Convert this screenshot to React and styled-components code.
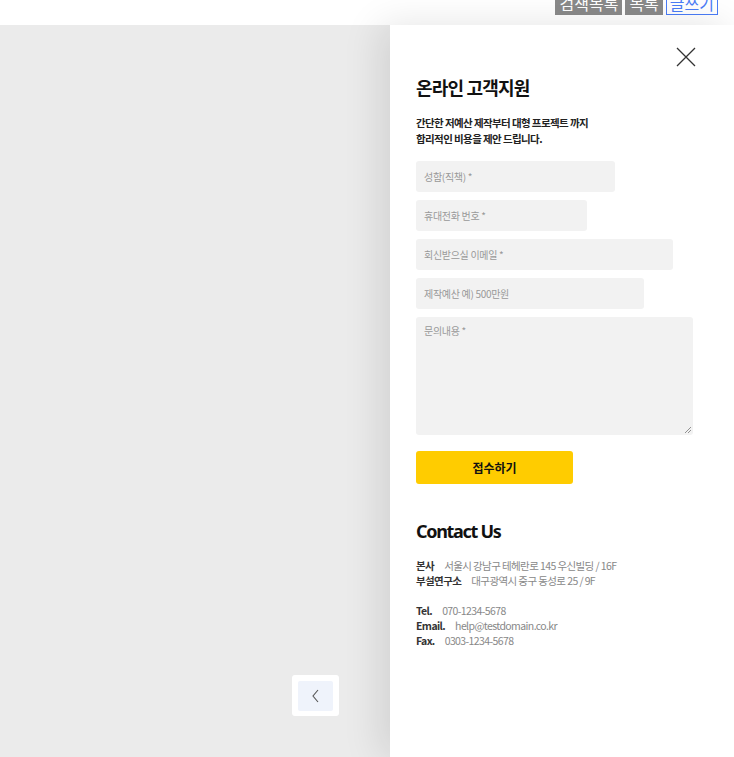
import React from "react";
import styled, { createGlobalStyle } from "styled-components";

const GlobalStyle = createGlobalStyle`
  html, body {
    margin: 0;
    padding: 0;
    height: 100%;
    overflow: hidden;
    background: #fff;
    font-family: "Noto Sans CJK KR", "Noto Sans", sans-serif;
  }
  #root {
    height: 100%;
  }
`;

const Page = styled.div`
  height: 100vh;
  display: flex;
  flex-direction: column;
`;

const Toolbar = styled.div`
  display: flex;
  justify-content: flex-end;
  gap: 3px;
  padding-right: 16px;
  margin-top: -9px;
  height: 34px;
  flex-shrink: 0;
`;

const ToolButton = styled.button`
  height: 24px;
  padding: 0 3px;
  border: ${(p) => (p.$primary ? "1px solid #4a7cf7" : "1px solid #8a8a8a")};
  background: ${(p) => (p.$primary ? "#fff" : "#8a8a8a")};
  color: ${(p) => (p.$primary ? "#4a7cf7" : "#fff")};
  font-family: "Noto Sans CJK KR", sans-serif;
  font-size: 16px;
  line-height: 20px;
  cursor: pointer;
`;

const Main = styled.div`
  flex: 1;
  display: flex;
  min-height: 0;
`;

const Overlay = styled.div`
  flex: 0 0 390px;
  background: #ebebeb;
  position: relative;
`;

const PrevButton = styled.div`
  position: absolute;
  left: 292px;
  top: 650px;
  width: 47px;
  height: 41px;
  background: #fff;
  border-radius: 3px;
  display: flex;
  align-items: center;
  justify-content: center;
`;

const PrevInner = styled.div`
  width: 35px;
  height: 30px;
  border-radius: 2px;
  background: #eff3fb;
  display: flex;
  align-items: center;
  justify-content: center;
`;

const Panel = styled.div`
  flex: 1;
  background: #fff;
  position: relative;
  box-shadow: -10px 0 36px rgba(0, 0, 0, 0.11);
  padding: 49px 26px 0 26px;
  box-sizing: border-box;
`;

const CloseButton = styled.div`
  position: absolute;
  right: 38px;
  top: 22px;
  width: 20px;
  height: 20px;
`;

const Title = styled.h2`
  margin: 0;
  font-size: 18px;
  font-weight: 700;
  letter-spacing: -0.8px;
  color: #111;
  line-height: 26px;
`;

const Desc = styled.p`
  margin: 15px 0 14px;
  font-size: 10.5px;
  font-weight: 700;
  line-height: 16px;
  letter-spacing: -0.6px;
  color: #222;
`;

const Form = styled.div`
  display: flex;
  flex-direction: column;
  gap: 8px;
`;

const Field = styled.div`
  width: ${(p) => p.$w}px;
  height: ${(p) => p.$h || 31}px;
  background: #f2f2f2;
  border-radius: 3px;
  box-sizing: border-box;
  padding: ${(p) => (p.$area ? "6px 8px" : "0 8px")};
  display: flex;
  align-items: ${(p) => (p.$area ? "flex-start" : "center")};
  font-size: 10px;
  color: #999;
  letter-spacing: -0.3px;
  position: relative;
`;

const Grip = styled.svg`
  position: absolute;
  right: 1px;
  bottom: 1px;
`;

const Submit = styled.button`
  margin-top: 16px;
  width: 157px;
  height: 33px;
  border: none;
  border-radius: 3px;
  background: #ffcc00;
  font-family: "Noto Sans CJK KR", sans-serif;
  font-size: 12px;
  font-weight: 700;
  color: #111;
  cursor: pointer;
`;

const ContactTitle = styled.h3`
  margin: 35px 0 15px;
  font-family: "Noto Sans", "Noto Sans CJK KR", sans-serif;
  font-size: 18px;
  font-weight: 700;
  letter-spacing: -1.3px;
  line-height: 24px;
  color: #111;
`;

const InfoBlock = styled.div`
  margin-bottom: 15px;
`;

const InfoLine = styled.div`
  font-size: 10.5px;
  line-height: 15px;
  letter-spacing: -0.6px;
  color: #888;
  white-space: nowrap;
`;

const Label = styled.span`
  font-weight: 700;
  color: #333;
  margin-right: ${(p) => p.$gap || 10}px;
`;

export default function App() {
  return (
    <Page>
      <GlobalStyle />
      <Toolbar>
        <ToolButton>검색목록</ToolButton>
        <ToolButton>목록</ToolButton>
        <ToolButton $primary>글쓰기</ToolButton>
      </Toolbar>
      <Main>
        <Overlay>
          <PrevButton>
            <PrevInner>
              <svg width="10" height="14" viewBox="0 0 10 14">
                <path d="M7 1 L2 7 L7 13" fill="none" stroke="#555" strokeWidth="1.1" />
              </svg>
            </PrevInner>
          </PrevButton>
        </Overlay>
        <Panel>
          <CloseButton>
            <svg width="20" height="20" viewBox="0 0 20 20">
              <path d="M1 1 L19 19 M19 1 L1 19" stroke="#333" strokeWidth="1.3" />
            </svg>
          </CloseButton>
          <Title>온라인 고객지원</Title>
          <Desc>
            간단한 저예산 제작부터 대형 프로젝트 까지
            <br />
            합리적인 비용을 제안 드립니다.
          </Desc>
          <Form>
            <Field $w={199}>성함(직책) *</Field>
            <Field $w={171}>휴대전화 번호 *</Field>
            <Field $w={257}>회신받으실 이메일 *</Field>
            <Field $w={228}>제작예산 예) 500만원</Field>
            <Field $w={277} $h={118} $area>
              문의내용 *
              <Grip width="8" height="8" viewBox="0 0 8 8">
                <path d="M7 1 L1 7 M7 4 L4 7" stroke="#777" strokeWidth="0.8" />
              </Grip>
            </Field>
          </Form>
          <Submit>접수하기</Submit>
          <ContactTitle>Contact Us</ContactTitle>
          <InfoBlock>
            <InfoLine>
              <Label>본사</Label>서울시 강남구 테헤란로 145 우신빌딩 / 16F
            </InfoLine>
            <InfoLine>
              <Label>부설연구소</Label>대구광역시 중구 동성로 25 / 9F
            </InfoLine>
          </InfoBlock>
          <InfoBlock>
            <InfoLine>
              <Label>Tel.</Label>070-1234-5678
            </InfoLine>
            <InfoLine>
              <Label>Email.</Label>help@testdomain.co.kr
            </InfoLine>
            <InfoLine>
              <Label>Fax.</Label>0303-1234-5678
            </InfoLine>
          </InfoBlock>
        </Panel>
      </Main>
    </Page>
  );
}
